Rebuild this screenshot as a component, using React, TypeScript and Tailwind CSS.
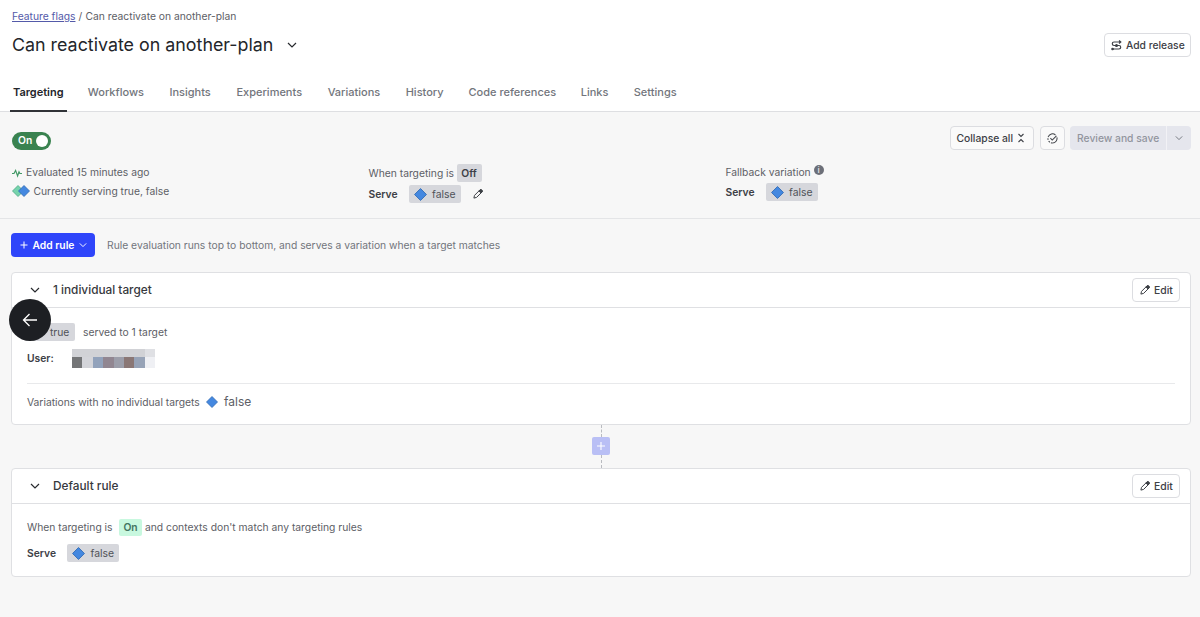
import type { ReactNode } from "react"
import clsx from "clsx"

const tabs = [
  { label: "Targeting", width: "w-[57.5px]" },
  { label: "Workflows", width: "w-[56px]" },
  { label: "Insights", width: "w-[42px]" },
  { label: "Experiments", width: "w-[66px]" },
  { label: "Variations", width: "w-[53px]" },
  { label: "History", width: "w-[38px]" },
  { label: "Code references", width: "w-[87px]" },
  { label: "Links", width: "w-[27px]" },
  { label: "Settings", width: "w-[44px]" },
]

// Redacted user name, one colour per block
const redactedTop = ["#d1d2d6", "#d1d2d6", "#d1d2d6", "#d1d2d6", "#d1d2d6", "#d1d2d6", "#d1d2d6", "#dfe0e4"]
const redactedBottom = ["#747577", "#d3d4d9", "#92a2bb", "#918691", "#9c9eaa", "#8a7775", "#97a3b7", "#eff0f4"]

function Chevron({ className }: { className?: string }) {
  return (
    <svg viewBox="0 0 10 10" className={clsx("shrink-0", className ?? "size-2.5")} fill="none" stroke="currentColor" strokeWidth="1.2">
      <path d="M1 3l4 4 4-4" />
    </svg>
  )
}

function Pencil() {
  return (
    <svg viewBox="0 0 10 10" className="size-2.5 shrink-0" fill="none" stroke="currentColor" strokeWidth="1" strokeLinejoin="round">
      <path d="M.9 9.1l.6-2.7L6.9 1q1-.8 1.9.1t.2 1.9L3.6 8.4z" />
      <path d="M5.9 2l2.1 2.1L9 3q.7-1-.2-1.9T6.9 1z" fill="currentColor" />
    </svg>
  )
}

function Diamond({ className }: { className?: string }) {
  return (
    <svg viewBox="0 0 12 12" className={clsx("shrink-0", className)}>
      <path d="M6 .5L11.5 6 6 11.5.5 6z" fill="#4488e0" stroke="#3069b4" strokeWidth=".8" />
    </svg>
  )
}

function VariationTag({ label }: { label: string }) {
  return (
    <span className="flex h-[18px] w-[52px] items-center rounded-xs bg-[#d6d7dc] pl-[5px] text-[10.4px] text-[#505258]">
      <Diamond className="mr-[5.5px] size-[13px]" />
      <span className="pt-[1.5px]">{label}</span>
    </span>
  )
}

function EditButton() {
  return (
    <button className="flex h-6 w-12 items-center gap-[5px] rounded border border-[#dcdde1] bg-white pl-[7px] text-[10.4px] font-medium text-[#3d4046]">
      <Pencil />
      <span className="-ml-px pt-[1.5px]">Edit</span>
    </button>
  )
}

function RuleCard({ title, className, children }: { title: string; className: string; children: ReactNode }) {
  return (
    <section className={clsx("rounded border border-[#dfe0e3] bg-white", className)}>
      <header className="flex h-[35px] items-center border-b border-[#dfe0e3] pr-2.5 pl-[18px] text-[#282a2e]">
        <Chevron />
        <h2 className="ml-[13px] flex-1 pt-[2px] text-[11.8px] font-medium text-[#36383d]">{title}</h2>
        <EditButton />
      </header>
      {children}
    </section>
  )
}

function PageHeader() {
  return (
    <header className="h-[112px] border-b border-[#dedfe2] bg-white">
      <div className="flex h-[74px] justify-between pr-[9px] pl-3 text-[#282a2e]">
        <div>
          <nav className="flex h-[25px] items-center pt-2 text-[10.3px] whitespace-nowrap text-[#5d6066]">
            <a className="w-[63px] text-[#545aa9] underline">Feature flags</a>
            <span className="w-[10.5px] pl-[3.5px]">/</span>
            <span>Can reactivate on another-plan</span>
          </nav>
          <div className="flex h-10 items-center whitespace-nowrap">
            <h1 className="w-[275px] pt-px text-[17.85px] text-[#23252a]">Can reactivate on another-plan</h1>
            <Chevron />
          </div>
        </div>
        <button className="mt-[33px] flex h-6 w-[87px] items-center gap-[5px] rounded border border-[#dcdde1] pl-[6px] text-[10.3px] font-medium whitespace-nowrap text-[#3d4046]">
          <svg viewBox="0 0 12 12" className="size-[11px] shrink-0" fill="none" stroke="currentColor" strokeWidth="1.3">
            <path d="M10.5 2.2H3.3a1.9 1.9 0 0 0 0 3.8h5.4a1.9 1.9 0 0 1 0 3.8H1.5M8.8.5l1.9 1.7-1.9 1.7" />
            <circle cx="6" cy="6" r="1" fill="currentColor" />
            <circle cx="1.7" cy="9.8" r=".8" fill="currentColor" />
          </svg>
          <span className="-ml-px pt-[1.5px]">Add release</span>
        </button>
      </div>
      <nav className="flex h-[38px] gap-[25.2px] pl-[9.5px] text-[11px] font-medium whitespace-nowrap text-[#72757c]">
        {tabs.map((tab, index) => (
          <a
            key={tab.label}
            className={clsx(
              "flex h-full items-center justify-center border-b-2",
              tab.width,
              index === 0 ? "-mr-[4.3px] border-[#313338] font-semibold text-[#23252a]" : "border-transparent",
            )}
          >
            {tab.label}
          </a>
        ))}
      </nav>
    </header>
  )
}

function Toolbar() {
  return (
    <div className="flex h-6 items-center text-[10.3px] font-medium whitespace-nowrap text-[#3d4046]">
      <button className="mt-[5px] flex h-[18px] w-[39px] items-center justify-between rounded-full bg-[#3a8350] pr-[3px] pl-1.5 font-semibold text-white">
        <span className="pt-px">On</span>
        <span className="size-3 rounded-full bg-white" />
      </button>
      <button className="ml-auto flex h-6 w-[84px] items-center rounded border border-[#dcdde1] bg-[#fafafa] pl-[5.5px]">
        <span className="w-[59.5px] pt-[1.5px] text-left">Collapse all</span>
        <svg viewBox="0 0 10 10" className="size-2.5" fill="none" stroke="currentColor" strokeWidth="1.1">
          <path d="M2.5 1L5 3.5 7.5 1M2.5 9L5 6.5 7.5 9" />
        </svg>
      </button>
      <button className="ml-1.5 flex h-6 w-[25px] items-center justify-center rounded border border-[#dcdde1] bg-[#fafafa]">
        <svg viewBox="0 0 12 12" className="size-[11px]" fill="none" stroke="currentColor" strokeWidth="1.1">
          <path d="M1.3 4.3A5 5 0 0 1 9.3 2.2M10.8 4.8A5 5 0 0 1 6 11" />
          <path d="M6 11A5 5 0 0 1 1.3 4.3" strokeDasharray="1.8 1.3" />
          <path d="M3.7 5.7l2 2 4.6-4.5" />
        </svg>
      </button>
      <div className="ml-[5px] flex h-6 w-[121px] rounded bg-[#e5e6ed] text-[#92959e]">
        <span className="flex w-[97px] items-center border-r border-[#f2f2f6] pt-[1.5px] pl-[7px]">Review and save</span>
        <span className="flex flex-1 items-center justify-center text-[#73767e]">
          <Chevron className="size-2" />
        </span>
      </div>
    </div>
  )
}

function StatusSection() {
  return (
    <section className="h-[107px] border-b border-[#e4e5e7] px-[9px] pt-3.5 pl-3">
      <Toolbar />
      <div className="mt-[13px] grid grid-cols-[356.5px_357px_1fr] text-[10.3px] whitespace-nowrap text-[#5d6066]">
        <div className="pt-px">
          <div className="flex h-[18px] items-center">
            <svg viewBox="0 0 10 10" className="mr-1 size-2.5" fill="none" stroke="#439966" strokeWidth="1.2">
              <path d="M0 5.5h2L3.6 2.4l2 5.6L7 3.8l.8 1.7H10" />
            </svg>
            Evaluated 15 minutes ago
          </div>
          <div className="flex h-[18px] items-center">
            <svg viewBox="0 0 18 12" className="mr-[3.5px] h-3 w-[18px]" strokeWidth=".8">
              <path d="M6 .5L11.5 6 6 11.5.5 6z" fill="#76d3ac" stroke="#4ba987" />
              <path d="M12 .5L17.5 6 12 11.5 6.5 6z" fill="#4488e0" stroke="#3069b4" />
            </svg>
            <span className="pt-px">Currently serving true, false</span>
          </div>
        </div>
        <div>
          <div className="flex h-5 items-center">
            <span className="w-[88px] pt-px">When targeting is</span>
            <span className="flex h-[18px] w-[25px] items-center justify-center rounded-xs bg-[#d6d7dc] pt-px font-semibold text-[#3d4046]">Off</span>
          </div>
          <div className="mt-[2px] flex h-[18px] items-center text-[#3d4046]">
            <span className="w-10 pt-[1.5px] font-semibold">Serve</span>
            <VariationTag label="false" />
            <span className="ml-[12px]">
              <Pencil />
            </span>
          </div>
        </div>
        <div>
          <div className="flex h-[18px] items-center">
            <span className="w-[88px] pt-[1.5px]">Fallback variation</span>
            <span className="mb-1 flex size-2.5 items-center justify-center rounded-full bg-[#6c6f78] text-[8px] font-bold text-[#d6d7dc]">i</span>
          </div>
          <div className="mt-[2px] flex h-[18px] items-center text-[#3d4046]">
            <span className="w-10 pt-[1.5px] font-semibold">Serve</span>
            <VariationTag label="false" />
          </div>
        </div>
      </div>
    </section>
  )
}

function Connector() {
  return (
    <div className="ml-[581px] flex h-[43px] w-[18px] flex-col items-center">
      <span className="h-3 border-l border-dashed border-[#b9bbc0]" />
      <span className="flex size-[18px] items-center justify-center rounded-xs bg-[#b9bff5] text-white">
        <svg viewBox="0 0 10 10" className="size-2.5" stroke="currentColor" strokeWidth="1.1">
          <path d="M5 1v8M1 5h8" />
        </svg>
      </span>
      <span className="flex-1 border-l border-dashed border-[#b9bbc0]" />
    </div>
  )
}

export default function App() {
  return (
    <main className="relative h-[617px] w-[1200px] overflow-hidden bg-[#f7f7f7] font-['Inter',sans-serif]">
      <PageHeader />
      <StatusSection />

      <div className="pt-3.5 pr-[9px] pl-[11px]">
        <div className="mb-[15px] flex h-6 items-center text-[10.3px] text-[#72757c]">
          <button className="flex h-6 w-[84px] items-center rounded bg-[#2f45fa] pl-2 font-semibold text-white">
            <svg viewBox="0 0 10 10" className="size-2.5" stroke="currentColor" strokeWidth="1">
              <path d="M5 1.5v7M1.5 5h7" />
            </svg>
            <span className="ml-[3.5px] w-[46px] pt-[1.5px] text-left whitespace-nowrap">Add rule</span>
            <Chevron className="size-2" />
          </button>
          <p className="ml-3 pt-[1.5px]">Rule evaluation runs top to bottom, and serves a variation when a target matches</p>
        </div>

        <RuleCard title="1 individual target" className="h-[153px]">
          <div className="px-[15px] pt-[15px] text-[10.3px] whitespace-nowrap text-[#5d6066]">
            <div className="flex h-[18px] items-center">
              <span className="mr-2 flex h-[18px] w-12 items-center rounded-xs bg-[#d6d7dc] pt-[1.5px] pl-[23px] text-[#505258]">true</span>
              <span className="pt-[1.5px]">served to 1 target</span>
            </div>
            <div className="mt-2 flex h-[19px] items-center">
              <span className="w-[45px] font-semibold text-[#3d4046]">User:</span>
              <div className="grid h-[19px] w-[83px] grid-cols-8 grid-rows-[8px_11px]">
                {[...redactedTop, ...redactedBottom].map((color, index) => (
                  <span key={index} style={{ backgroundColor: color }} />
                ))}
              </div>
            </div>
            <div className="mt-[15px] flex h-[37px] items-center border-t border-[#e8e9eb]">
              <span className="w-[179px] pt-[1.5px]">Variations with no individual targets</span>
              <Diamond className="size-3" />
              <span className="ml-1.5 text-[12px]">false</span>
            </div>
          </div>
        </RuleCard>

        <Connector />

        <RuleCard title="Default rule" className="h-[109px]">
          <div className="px-[15px] pt-[15px] text-[10.3px] whitespace-nowrap text-[#5d6066]">
            <div className="flex h-[17px] items-center">
              <span className="w-[92px]">When targeting is</span>
              <span className="mr-[3px] flex h-[17px] w-[23px] items-center justify-center rounded-xs bg-[#c8f8df] font-semibold text-[#437461]">On</span>
              and contexts don't match any targeting rules
            </div>
            <div className="mt-2 flex h-[18px] items-center">
              <span className="w-10 pt-[1.5px] font-semibold text-[#3d4046]">Serve</span>
              <VariationTag label="false" />
            </div>
          </div>
        </RuleCard>
      </div>

      {/* Floating back button, sits over the first card */}
      <button className="absolute top-[299px] left-[9px] flex size-[42px] items-center justify-center rounded-full bg-[#1d1f23] text-white">
        <svg viewBox="0 0 16 14" className="h-3.5 w-4" fill="none" stroke="currentColor" strokeWidth="1.3">
          <path d="M7.5 1L1.5 7l6 6M1.5 7H15" />
        </svg>
      </button>
    </main>
  )
}
